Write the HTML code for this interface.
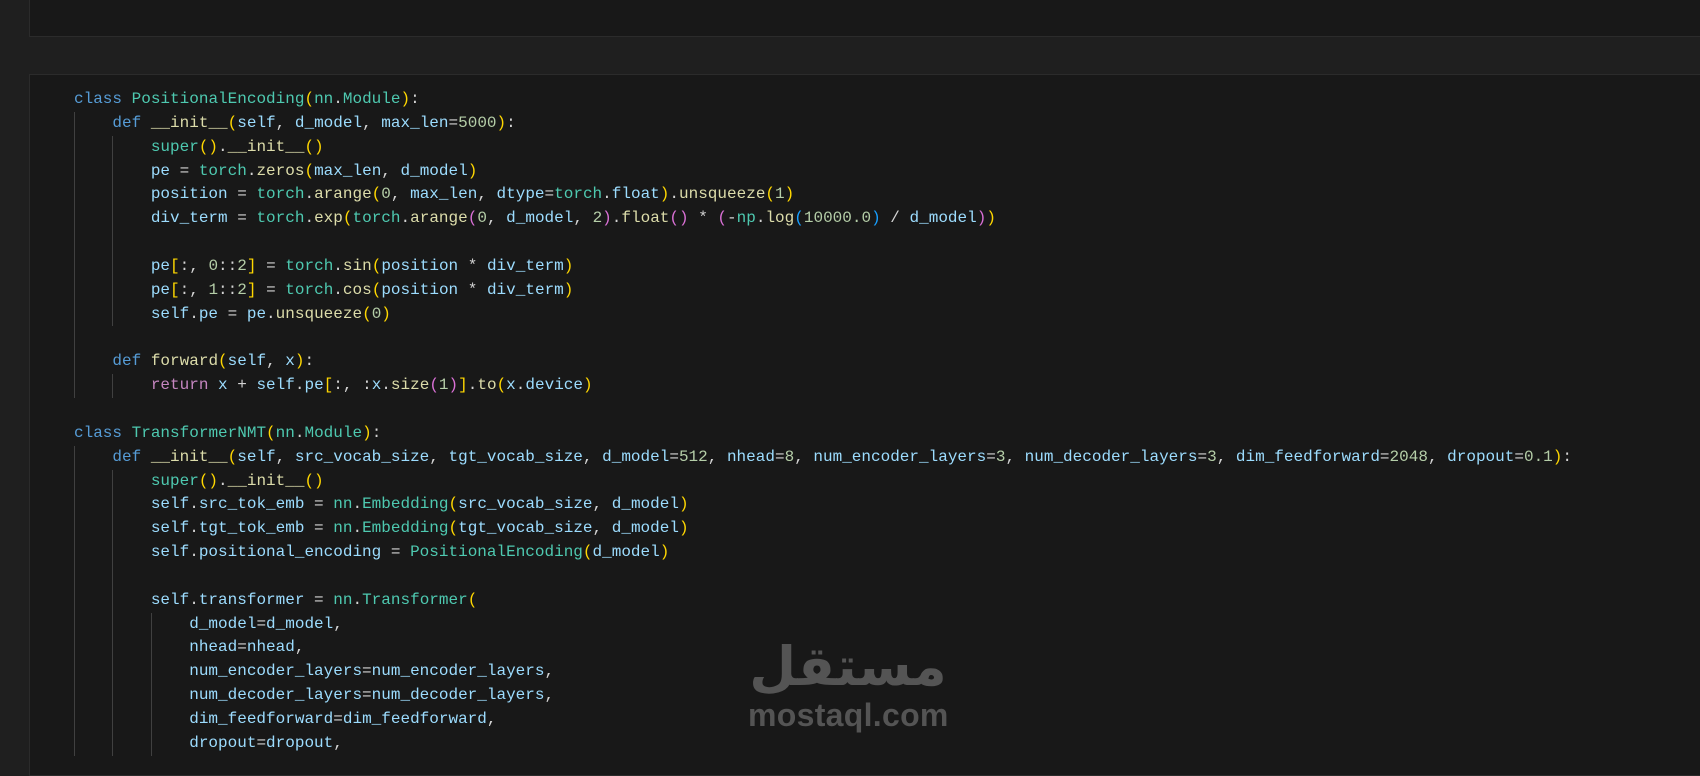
<!DOCTYPE html>
<html><head><meta charset="utf-8"><style>
html,body{margin:0;padding:0;background:#1f1f1f;width:1700px;height:756px;overflow:hidden}
.cell1{position:absolute;left:29px;top:-2px;width:1700px;height:37px;background:#181818;border:1px solid #2b2b2b}
.cell2{position:absolute;left:29px;top:74px;width:1700px;height:700px;background:#181818;border:1px solid #2b2b2b}
pre{position:absolute;left:74px;top:88px;margin:0;font-family:"Liberation Mono",monospace;font-size:16px;line-height:23.85px;color:#d4d4d4}
.g{display:inline-block;width:4ch;box-shadow:inset 1px 0 #404040;height:23.85px;vertical-align:top}
.k{color:#569cd6}.r{color:#c586c0}.c{color:#4ec9b0}.v{color:#9cdcfe}.f{color:#dcdcaa}.n{color:#b5cea8}
.y{color:#ffd700}.p{color:#da70d6}.b{color:#179fff}
.wm{position:absolute;left:748px;top:636px;width:200px;text-align:center;color:#545454}
.ar{font-family:"DejaVu Sans",sans-serif;font-weight:bold;font-size:54px;line-height:62px}
.en{font-family:"Liberation Sans",sans-serif;font-weight:bold;font-size:32px;line-height:34px;letter-spacing:0.3px}
</style></head><body>
<div class="cell1"></div>
<div class="cell2"></div>
<pre><span class="k">class</span> <span class="c">PositionalEncoding</span><span class="y">(</span><span class="c">nn</span>.<span class="c">Module</span><span class="y">)</span>:
<span class="g">    </span><span class="k">def</span> <span class="f">__init__</span><span class="y">(</span><span class="v">self</span>, <span class="v">d_model</span>, <span class="v">max_len</span>=<span class="n">5000</span><span class="y">)</span>:
<span class="g">    </span><span class="g">    </span><span class="c">super</span><span class="y">()</span>.<span class="f">__init__</span><span class="y">()</span>
<span class="g">    </span><span class="g">    </span><span class="v">pe</span> = <span class="c">torch</span>.<span class="f">zeros</span><span class="y">(</span><span class="v">max_len</span>, <span class="v">d_model</span><span class="y">)</span>
<span class="g">    </span><span class="g">    </span><span class="v">position</span> = <span class="c">torch</span>.<span class="f">arange</span><span class="y">(</span><span class="n">0</span>, <span class="v">max_len</span>, <span class="v">dtype</span>=<span class="c">torch</span>.<span class="v">float</span><span class="y">)</span>.<span class="f">unsqueeze</span><span class="y">(</span><span class="n">1</span><span class="y">)</span>
<span class="g">    </span><span class="g">    </span><span class="v">div_term</span> = <span class="c">torch</span>.<span class="f">exp</span><span class="y">(</span><span class="c">torch</span>.<span class="f">arange</span><span class="p">(</span><span class="n">0</span>, <span class="v">d_model</span>, <span class="n">2</span><span class="p">)</span>.<span class="f">float</span><span class="p">()</span> * <span class="p">(</span>-<span class="c">np</span>.<span class="f">log</span><span class="b">(</span><span class="n">10000.0</span><span class="b">)</span> / <span class="v">d_model</span><span class="p">)</span><span class="y">)</span>
<span class="g">    </span><span class="g">    </span>
<span class="g">    </span><span class="g">    </span><span class="v">pe</span><span class="y">[</span>:, <span class="n">0</span>::<span class="n">2</span><span class="y">]</span> = <span class="c">torch</span>.<span class="f">sin</span><span class="y">(</span><span class="v">position</span> * <span class="v">div_term</span><span class="y">)</span>
<span class="g">    </span><span class="g">    </span><span class="v">pe</span><span class="y">[</span>:, <span class="n">1</span>::<span class="n">2</span><span class="y">]</span> = <span class="c">torch</span>.<span class="f">cos</span><span class="y">(</span><span class="v">position</span> * <span class="v">div_term</span><span class="y">)</span>
<span class="g">    </span><span class="g">    </span><span class="v">self</span>.<span class="v">pe</span> = <span class="v">pe</span>.<span class="f">unsqueeze</span><span class="y">(</span><span class="n">0</span><span class="y">)</span>
<span class="g">    </span>
<span class="g">    </span><span class="k">def</span> <span class="f">forward</span><span class="y">(</span><span class="v">self</span>, <span class="v">x</span><span class="y">)</span>:
<span class="g">    </span><span class="g">    </span><span class="r">return</span> <span class="v">x</span> + <span class="v">self</span>.<span class="v">pe</span><span class="y">[</span>:, :<span class="v">x</span>.<span class="f">size</span><span class="p">(</span><span class="n">1</span><span class="p">)</span><span class="y">]</span>.<span class="f">to</span><span class="y">(</span><span class="v">x</span>.<span class="v">device</span><span class="y">)</span>

<span class="k">class</span> <span class="c">TransformerNMT</span><span class="y">(</span><span class="c">nn</span>.<span class="c">Module</span><span class="y">)</span>:
<span class="g">    </span><span class="k">def</span> <span class="f">__init__</span><span class="y">(</span><span class="v">self</span>, <span class="v">src_vocab_size</span>, <span class="v">tgt_vocab_size</span>, <span class="v">d_model</span>=<span class="n">512</span>, <span class="v">nhead</span>=<span class="n">8</span>, <span class="v">num_encoder_layers</span>=<span class="n">3</span>, <span class="v">num_decoder_layers</span>=<span class="n">3</span>, <span class="v">dim_feedforward</span>=<span class="n">2048</span>, <span class="v">dropout</span>=<span class="n">0.1</span><span class="y">)</span>:
<span class="g">    </span><span class="g">    </span><span class="c">super</span><span class="y">()</span>.<span class="f">__init__</span><span class="y">()</span>
<span class="g">    </span><span class="g">    </span><span class="v">self</span>.<span class="v">src_tok_emb</span> = <span class="c">nn</span>.<span class="c">Embedding</span><span class="y">(</span><span class="v">src_vocab_size</span>, <span class="v">d_model</span><span class="y">)</span>
<span class="g">    </span><span class="g">    </span><span class="v">self</span>.<span class="v">tgt_tok_emb</span> = <span class="c">nn</span>.<span class="c">Embedding</span><span class="y">(</span><span class="v">tgt_vocab_size</span>, <span class="v">d_model</span><span class="y">)</span>
<span class="g">    </span><span class="g">    </span><span class="v">self</span>.<span class="v">positional_encoding</span> = <span class="c">PositionalEncoding</span><span class="y">(</span><span class="v">d_model</span><span class="y">)</span>
<span class="g">    </span><span class="g">    </span>
<span class="g">    </span><span class="g">    </span><span class="v">self</span>.<span class="v">transformer</span> = <span class="c">nn</span>.<span class="c">Transformer</span><span class="y">(</span>
<span class="g">    </span><span class="g">    </span><span class="g">    </span><span class="v">d_model</span>=<span class="v">d_model</span>,
<span class="g">    </span><span class="g">    </span><span class="g">    </span><span class="v">nhead</span>=<span class="v">nhead</span>,
<span class="g">    </span><span class="g">    </span><span class="g">    </span><span class="v">num_encoder_layers</span>=<span class="v">num_encoder_layers</span>,
<span class="g">    </span><span class="g">    </span><span class="g">    </span><span class="v">num_decoder_layers</span>=<span class="v">num_decoder_layers</span>,
<span class="g">    </span><span class="g">    </span><span class="g">    </span><span class="v">dim_feedforward</span>=<span class="v">dim_feedforward</span>,
<span class="g">    </span><span class="g">    </span><span class="g">    </span><span class="v">dropout</span>=<span class="v">dropout</span>,
</pre>
<div class="wm"><div class="ar">مستقل</div><div class="en">mostaql.com</div></div>
</body></html>
